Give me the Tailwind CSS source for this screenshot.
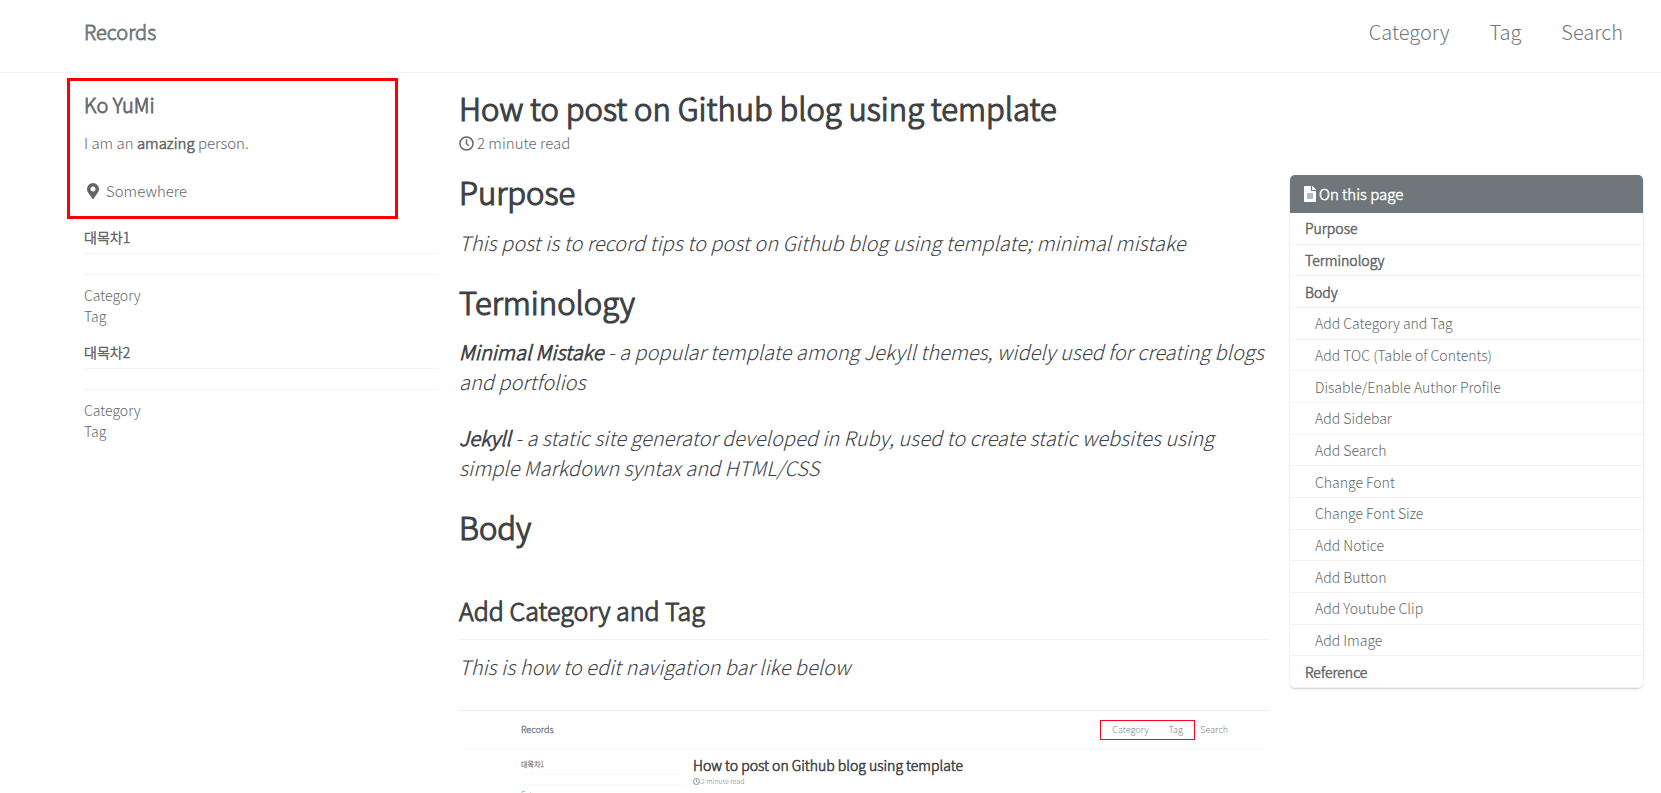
<!DOCTYPE html>
<html lang="en">
<head>
<meta charset="utf-8">
<meta name="viewport" content="width=device-width, initial-scale=1">
<title>How to post on Github blog using template</title>
<script src="https://cdn.jsdelivr.net/npm/@tailwindcss/browser@4"></script>
</head>
<body class="h-screen overflow-hidden bg-white font-['Noto_Sans_CJK_KR',sans-serif] font-light text-[#3d4144]">
<header class="flex h-[73px] items-center justify-between border-b border-[#f2f3f3] pr-[38px] pb-2 pl-[84px] text-[20px] text-[#6f777d]">
  <a href="#" class="[-webkit-text-stroke:0.04em]">Records</a>
  <nav class="flex gap-10">
    <a href="#">Category</a>
    <a href="#">Tag</a>
    <a href="#">Search</a>
  </nav>
</header>
<div class="flex items-start pr-[18px] pl-[84px]">
  <aside class="w-[355px] shrink-0 pt-[5px] text-[15px] text-[#646769]">
    <section class="-ml-[17px] h-[141px] w-[331px] border-3 border-[#ff0000] pt-[6px] pl-[14px]">
      <h3 class="text-[20px] leading-9 [-webkit-text-stroke:0.04em]">Ko YuMi</h3>
      <p class="mt-2 leading-6">I am an <strong class="font-light [-webkit-text-stroke:0.04em]">amazing</strong> person.</p>
      <p class="mt-6 flex items-center gap-[7px] leading-6">
        <svg class="ml-[3px] h-4 w-3" viewBox="0 0 384 512" fill="currentColor"><path d="M172 502C27 291 0 269 0 192a192 192 0 01384 0c0 77-27 99-172 310-10 13-30 13-40 0zM192 272a80 80 0 100-160 80 80 0 000 160z"/></svg>
        <span>Somewhere</span>
      </p>
    </section>
    <nav class="text-[14px]">
      <h4 class="mt-1 border-b border-[#f2f3f3] pt-[3px] pb-[5px] leading-[22px] [-webkit-text-stroke:0.04em]">대목차1</h4>
      <ul class="mt-5 border-t border-[#f2f3f3] pt-[10px] leading-[21px]"><li><a href="#">Category</a></li><li><a href="#">Tag</a></li></ul>
      <h4 class="mt-[11px] border-b border-[#f2f3f3] pt-[3px] pb-[5px] leading-[22px] [-webkit-text-stroke:0.04em]">대목차2</h4>
      <ul class="mt-5 border-t border-[#f2f3f3] pt-[10px] leading-[21px]"><li><a href="#">Category</a></li><li><a href="#">Tag</a></li></ul>
    </nav>
  </aside>
  <main class="ml-5 min-w-0 flex-1 pt-[11px] text-[20px] leading-[30px]">
    <h1 class="text-[31px] leading-12 [-webkit-text-stroke:0.04em]">How to post on Github blog using template</h1>
    <p class="flex items-center gap-[3px] text-[15px] leading-[22px] text-[#646769]">
      <svg class="h-[15px] w-[15px]" viewBox="0 0 16 16" fill="none" stroke="currentColor" stroke-width="1.6"><circle cx="8" cy="8" r="7"/><path d="M8 3.5V8.3L10.4 10.4"/></svg>
      <span>2 minute read</span>
    </p>
    <h2 class="mt-[14px] text-[31px] leading-12 [-webkit-text-stroke:0.04em]">Purpose</h2>
    <p class="mt-3 italic">This post is to record tips to post on Github blog using template; minimal mistake</p>
    <h2 class="mt-5 text-[31px] leading-12 [-webkit-text-stroke:0.04em]">Terminology</h2>
    <p class="mt-[11px] italic"><strong class="font-light [-webkit-text-stroke:0.04em]">Minimal Mistake</strong> - a popular template among Jekyll themes, widely used for creating blogs and portfolios</p>
    <p class="mt-[26px] italic"><strong class="font-light [-webkit-text-stroke:0.04em]">Jekyll</strong> - a static site generator developed in Ruby, used to create static websites using simple Markdown syntax and HTML/CSS</p>
    <h2 class="mt-5 text-[31px] leading-12 [-webkit-text-stroke:0.04em]">Body</h2>
    <h3 class="mt-[39px] border-b border-[#f2f3f3] pb-[9px] text-[25px] leading-10 [-webkit-text-stroke:0.04em]">Add Category and Tag</h3>
    <p class="mt-3 italic">This is how to edit navigation bar like below</p>
    <figure class="mt-7 border-t border-[#ebecec]">
      <div class="flex h-[38px] items-center border-b border-[#f8f8f8] pr-[41px] pl-[62px] text-[9px] leading-4 text-[#7a8288]">
        <span class="flex-1 [-webkit-text-stroke:0.04em]">Records</span>
        <span class="flex h-5 w-[95px] items-center gap-5 border border-[#ff0020] pl-[11px]"><span>Category</span><span>Tag</span></span>
        <span class="ml-[5px]">Search</span>
      </div>
      <div class="flex h-20 pl-[62px] text-[7px] text-[#7a8288]">
        <div class="w-[164px] pt-2">
          <p class="border-b border-[#fafafa] pt-px pb-1 leading-3 [-webkit-text-stroke:0.04em]">대목차1</p>
          <p class="mt-[9px] border-t border-[#fafafa] pt-[3px] leading-3">Category</p>
        </div>
        <div class="ml-[8px] pt-[6px]">
          <p class="text-[14px] leading-5 text-[#3d4144] [-webkit-text-stroke:0.04em]">How to post on Github blog using template</p>
          <p class="flex items-center gap-px leading-3"><svg class="h-[7px] w-[7px]" viewBox="0 0 16 16" fill="none" stroke="currentColor" stroke-width="2"><circle cx="8" cy="8" r="7"/><path d="M8 3.5V8.3L10.4 10.4"/></svg>2 minute read</p>
        </div>
      </div>
    </figure>
  </main>
  <nav class="mt-[102px] ml-[21px] w-[353px] shrink-0 overflow-hidden rounded-[5px] text-[14px] text-[#646769] shadow-[0_1px_2px_rgba(0,0,0,0.2)]">
    <h4 class="flex h-[38px] items-center gap-[3px] bg-[#6f777d] pl-[14px] text-[15px] text-white [-webkit-text-stroke:0.03em]">
      <svg class="h-4 w-3" viewBox="0 0 384 512" fill="currentColor"><path fill-rule="evenodd" d="M224 136V0H24C11 0 0 11 0 24v464c0 13 11 24 24 24h336c13 0 24-11 24-24V160H248c-13 0-24-11-24-24zM96 236h192v36H96zM96 300h192v36H96zM96 364h192v36H96zM384 122v6H256V0h6c7 0 12 2 17 7l98 98c5 5 7 10 7 17z"/></svg>
      On this page
    </h4>
    <ul class="grid h-[475px] auto-rows-fr leading-[22px]">
      <li class="flex items-center border-b border-[#f2f3f3] pl-[15px] [-webkit-text-stroke:0.04em]"><a href="#">Purpose</a></li>
      <li class="flex items-center border-b border-[#f2f3f3] pl-[15px] [-webkit-text-stroke:0.04em]"><a href="#">Terminology</a></li>
      <li class="flex items-center border-b border-[#f2f3f3] pl-[15px] [-webkit-text-stroke:0.04em]"><a href="#">Body</a></li>
      <li class="flex items-center border-b border-[#f2f3f3] pl-[25px]"><a href="#">Add Category and Tag</a></li>
      <li class="flex items-center border-b border-[#f2f3f3] pl-[25px]"><a href="#">Add TOC (Table of Contents)</a></li>
      <li class="flex items-center border-b border-[#f2f3f3] pl-[25px]"><a href="#">Disable/Enable Author Profile</a></li>
      <li class="flex items-center border-b border-[#f2f3f3] pl-[25px]"><a href="#">Add Sidebar</a></li>
      <li class="flex items-center border-b border-[#f2f3f3] pl-[25px]"><a href="#">Add Search</a></li>
      <li class="flex items-center border-b border-[#f2f3f3] pl-[25px]"><a href="#">Change Font</a></li>
      <li class="flex items-center border-b border-[#f2f3f3] pl-[25px]"><a href="#">Change Font Size</a></li>
      <li class="flex items-center border-b border-[#f2f3f3] pl-[25px]"><a href="#">Add Notice</a></li>
      <li class="flex items-center border-b border-[#f2f3f3] pl-[25px]"><a href="#">Add Button</a></li>
      <li class="flex items-center border-b border-[#f2f3f3] pl-[25px]"><a href="#">Add Youtube Clip</a></li>
      <li class="flex items-center border-b border-[#f2f3f3] pl-[25px]"><a href="#">Add Image</a></li>
      <li class="flex items-center border-b border-[#f2f3f3] pl-[15px] [-webkit-text-stroke:0.04em]"><a href="#">Reference</a></li>
    </ul>
  </nav>
</div>
</body>
</html>
